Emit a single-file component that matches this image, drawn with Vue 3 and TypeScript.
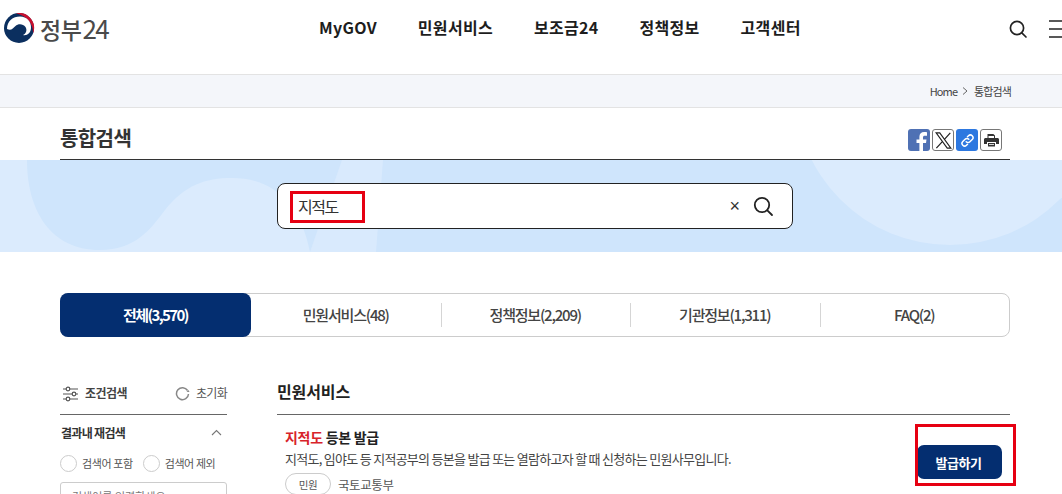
<script setup lang="ts">
const navItems: string[] = ['MyGOV', '민원서비스', '보조금24', '정책정보', '고객센터']
const tabs: string[] = ['민원서비스(48)', '정책정보(2,209)', '기관정보(1,311)', 'FAQ(2)']
</script>

<template>
  <div class="page">
    <header class="top">
      <div class="logo">
        <svg width="32" height="30" viewBox="0 0 32 30">
          <circle cx="16" cy="15" r="15" fill="#0b2f5f" />
          <path d="M13 .3A15 15 0 0 1 30 20.500C30.500 11 24 3 13 .3Z" fill="#c8102e" />
          <path d="M4 16C4 8 10 3.500 17 3.500 24 3.500 28.500 9 28 15 27.800 20 24 23 20 22 23 21 24.500 17 22.500 14 20 10.500 15 10.500 12.500 13 10 15.500 8 18 4 16Z" fill="#fff" />
        </svg>
        <span class="logo-text">정부<b>24</b></span>
      </div>
      <nav class="nav">
        <a v-for="n in navItems" :key="n">{{ n }}</a>
      </nav>
      <div class="top-icons">
        <svg width="20" height="20" viewBox="0 0 20 20" fill="none" stroke="#222" stroke-width="1.700">
          <circle cx="9" cy="9" r="6.600" />
          <path d="M13.800 13.800 18 18" stroke-linecap="round" />
        </svg>
        <svg class="burger" width="16" height="18" viewBox="0 0 16 18" stroke="#222" stroke-width="1.600">
          <path d="M0 1h16M0 9h16M0 17h16" />
        </svg>
      </div>
    </header>

    <div class="crumb">
      <div class="wrap crumb-in">
        <span class="home">Home</span>
        <svg width="6" height="8" viewBox="0 0 6 8" fill="none" stroke="#666"><path d="M1 .5 5 4 1 7.500" /></svg>
        <span class="here">통합검색</span>
      </div>
    </div>

    <div class="wrap title-row">
      <h1>통합검색</h1>
      <div class="share">
        <span class="sq fb">
          <svg width="21" height="22" viewBox="0 0 21 22"><path d="M14 22v-8h3l.5-3.500H14V8.500c0-1.200.5-1.800 1.800-1.800H18V3.200c-.6-.1-1.700-.2-2.800-.2-2.900 0-4.800 1.700-4.800 4.800v2.700H7.500V14h2.900v8Z" fill="#fff" /></svg>
        </span>
        <span class="sq line">
          <svg width="17" height="17" viewBox="0 0 15 15" fill="none" stroke="#222"><path d="M1 .8h3.200L14 14.200h-3.200Z" /><path d="M13.500.8 8.300 6.500M6.300 8.700 1.200 14.200" stroke-width="1.100" /></svg>
        </span>
        <span class="sq link">
          <svg width="15" height="15" viewBox="0 0 15 15" fill="none" stroke="#fff" stroke-width="1.500" stroke-linecap="round"><path d="M6.200 8.800a2.600 2.600 0 0 0 3.700 0l2.300-2.300a2.600 2.600 0 0 0-3.700-3.700L7.500 3.800" /><path d="M8.800 6.200a2.600 2.600 0 0 0-3.700 0L2.800 8.500a2.600 2.600 0 0 0 3.700 3.700l1-1" /></svg>
        </span>
        <span class="sq line">
          <svg width="15" height="14" viewBox="0 0 15 14" fill="#333"><path d="M3.500 1h5.800L11 2.500V5H10V3H4.500v2h-1Z" /><path d="M1.500 5h12c.8 0 1.500.7 1.500 1.500V11h-3V9H3v2H0V6.500C0 5.700.7 5 1.500 5Z" /><path d="M4 10h7v3.500H4Z" /><path d="M5 11.500h5" stroke="#fff" stroke-width=".8" /></svg>
        </span>
      </div>
    </div>

    <section class="band">
      <svg class="band-art" width="1062" height="92" viewBox="0 0 1062 92">
        <path d="M0 0H27C27 50 50 90 100 90 135 90 150 70 165 50 185 25 205 18 232 18 270 18 300 40 310 92H0Z" fill="#dbebfd" />
        <path d="M342 0H383L376 92H310Z" fill="#d9eafd" />
        <circle cx="950" cy="-70" r="155" fill="#dbebfd" />
      </svg>
      <div class="searchbox">
        <span class="query">지적도</span>
        <span class="clear">×</span>
        <svg width="22" height="22" viewBox="0 0 22 22" fill="none" stroke="#222" stroke-width="1.800">
          <circle cx="10" cy="10" r="7.200" />
          <path d="M15.300 15.300 20 20" stroke-linecap="round" />
        </svg>
      </div>
    </section>

    <div class="wrap">
      <div class="tabs">
        <a class="tab active">전체(3,570)</a>
        <a v-for="t in tabs" :key="t" class="tab">{{ t }}</a>
      </div>

      <div class="cols">
        <aside class="side">
          <div class="side-head">
            <svg width="17" height="16" viewBox="0 0 17 16" fill="none" stroke="#555" stroke-width="1.200">
              <path d="M1 3h3M8 3h8M1 8h9M14 8h2M1 13h3M8 13h8" />
              <circle cx="6" cy="3" r="1.800" /><circle cx="12" cy="8" r="1.800" /><circle cx="6" cy="13" r="1.800" />
            </svg>
            <strong>조건검색</strong>
            <svg class="reset-ic" width="15" height="15" viewBox="0 0 15 15" fill="none" stroke="#888" stroke-width="1.500">
              <path d="M12.600 4.500A6 6 0 1 0 13.500 8" />
              <path d="M13.500 4 11.500 6h3Z" fill="#888" stroke="none" />
            </svg>
            <span class="reset">초기화</span>
          </div>
          <div class="side-sub">
            <strong>결과내 재검색</strong>
            <svg width="11" height="7" viewBox="0 0 11 7" fill="none" stroke="#777" stroke-width="1.100"><path d="M1 6 5.500 1.500 10 6" /></svg>
          </div>
          <div class="radios">
            <label><i></i>검색어 포함</label>
            <label><i></i>검색어 제외</label>
          </div>
          <div class="side-input">검색어를 입력하세요</div>
        </aside>

        <main class="main">
          <h2>민원서비스</h2>
          <div class="item">
            <div class="item-body">
              <h3><em>지적도</em> 등본 발급</h3>
              <p>지적도, 임야도 등 지적공부의 등본을 발급 또는 열람하고자 할 때 신청하는 민원사무입니다.</p>
              <div class="meta"><span class="pill">민원</span><span>국토교통부</span></div>
            </div>
            <button class="issue" type="button">발급하기</button>
          </div>
        </main>
      </div>
    </div>

    <span class="mark mark-query"></span>
    <span class="mark mark-btn"></span>
  </div>
</template>

<style>
html, body { margin: 0; overflow: hidden; background: #fff; }
</style>

<style scoped>
.page {
  position: relative;
  width: 1062px;
  height: 494px;
  overflow: hidden;
  font-family: "Noto Sans CJK KR", "Noto Sans", sans-serif;
  color: #222;
}
.wrap { width: 950px; margin-left: 60px; }

.top { height: 74px; position: relative; display: flex; align-items: flex-start; }
.logo { position: absolute; left: 3px; top: 13px; display: flex; align-items: center; gap: 5px; height: 30px; }
.logo-text { font-size: 23px; font-weight: 500; color: #4a4a4a; line-height: 30px; white-space: nowrap; letter-spacing: -.4px; }
.logo-text b { font-size: 26px; font-weight: 400; letter-spacing: -1.800px; margin-left: 1px; }
.nav { margin-left: 319px; margin-top: 15px; display: flex; gap: 41px; }
.nav a { font-size: 16px; font-weight: 700; line-height: 24px; color: #1d1d1d; letter-spacing: .3px; }
.top-icons { position: absolute; left: 1008px; top: 19px; display: flex; align-items: center; gap: 21px; }

.crumb { height: 32px; background: #f4f6fa; border-top: 1px solid #e3e3e3; border-bottom: 1px solid #e3e3e3; }
.crumb-in { display: flex; justify-content: flex-end; align-items: center; gap: 5px; height: 32px; font-size: 11px; color: #444; margin-right: 0; }
.home { letter-spacing: -.9px; }
.here { margin-left: 1px; letter-spacing: -.9px; margin-right: -1px; }

.title-row { height: 51px; border-bottom: 1px solid #333; display: flex; justify-content: space-between; align-items: flex-start; }
h1 { margin: 14px 0 0; font-size: 20px; line-height: 32px; font-weight: 700; color: #333; letter-spacing: -.6px; }
.share { display: flex; gap: 2px; margin: 21px 8px 0 0; }
.sq { width: 22px; height: 22px; box-sizing: border-box; border-radius: 3px; display: flex; align-items: center; justify-content: center; overflow: hidden; }
.fb { background: #4f71b4; align-items: flex-end; }
.line { border: 1px solid #777; background: #fff; }
.link { background: #2d78e0; }

.band { position: relative; height: 92px; background: #cfe5fc; overflow: hidden; }
.band-art { position: absolute; left: 0; top: 0; }
.searchbox { position: relative; margin-left: 277px; top: 23px; width: 516px; height: 46px; box-sizing: border-box; background: #fff; border: 1px solid #222; border-radius: 8px; display: flex; align-items: center; padding: 0 18px 0 20px; }
.query { font-size: 16px; color: #333; flex: 1; letter-spacing: -1.500px; }
.clear { font-size: 18px; color: #333; margin-right: 12px; font-family: "Liberation Sans", sans-serif; }

.tabs { margin-top: 41px; height: 44px; box-sizing: border-box; border: 1px solid #ccc; border-radius: 8px; display: flex; align-items: center; }
.tab { flex: 1; position: relative; text-align: center; font-size: 15px; line-height: 44px; color: #444; letter-spacing: -1.200px; font-weight: 500; }
.tab + .tab + .tab::before { content: ""; position: absolute; left: 0; top: 10px; height: 24px; width: 1px; background: #d5d5d5; }
.tab.active { flex: 0 0 191px; height: 44px; margin: -1px 0 -1px -1px; background: #042e70; color: #fff; border-radius: 8px; font-weight: 700; letter-spacing: -1.600px; }

.cols { display: flex; gap: 50px; margin-top: 45px; }
.side { width: 167px; flex: none; }
.side-head { height: 29px; padding: 3px 0 0 2px; border-bottom: 1px solid #666; display: flex; align-items: flex-start; }
.side-head strong { margin-left: 6px; font-size: 12px; line-height: 16px; letter-spacing: -.55px; color: #444; }
.side-head svg:first-child { margin-top: 1px; }
.reset-ic { margin: 1px 6px 0 auto; }
.reset { font-size: 12px; line-height: 16px; color: #555; letter-spacing: -.7px; }
.side-sub { display: flex; justify-content: space-between; align-items: center; margin-top: 8px; height: 18px; padding-right: 5px; padding-left: 1px; }
.side-sub strong { font-size: 12px; color: #333; letter-spacing: -.7px; }
.radios { display: flex; gap: 10px; margin-top: 14px; }
.radios label { display: flex; align-items: center; gap: 5px; font-size: 11px; color: #555; letter-spacing: -.4px; line-height: 17px; white-space: nowrap; }
.radios i { width: 17px; height: 17px; border: 1px solid #ccc; border-radius: 50%; box-sizing: border-box; }
.side-input { margin-top: 10px; height: 30px; box-sizing: border-box; border: 1px solid #ccc; border-radius: 3px; font-size: 11px; color: #777; padding: 5px 11px; line-height: 16px; }

.main { flex: 1; }
h2 { margin: -2px 0 0; height: 32px; padding-bottom: 2px; border-bottom: 1px solid #666; font-size: 16px; line-height: 22px; font-weight: 700; color: #222; letter-spacing: -.1px; }
.item { display: flex; justify-content: space-between; padding-left: 8px; position: relative; }
.item-body { padding-top: 12px; }
h3 { margin: 0; font-size: 14px; line-height: 20px; font-weight: 700; color: #222; letter-spacing: -.3px; }
h3 em { font-style: normal; color: #d8232a; }
p { margin: 3px 0 0; font-size: 13px; line-height: 18px; color: #444; letter-spacing: -.72px; white-space: nowrap; }
.meta { display: flex; align-items: center; gap: 7px; margin-top: 5px; font-size: 12.500px; color: #555; letter-spacing: -.4px; }
.pill { width: 46px; height: 22px; box-sizing: border-box; border: 1px solid #ccc; border-radius: 11px; font-size: 10.500px; display: flex; align-items: center; justify-content: center; color: #555; }
.issue { position: absolute; left: 640px; top: 30px; width: 85px; height: 34px; border: 0; border-radius: 7px; background: #042e70; color: #fff; font: 700 13px "Noto Sans CJK KR", sans-serif; letter-spacing: -.5px; padding: 0 2px 0 0; }

.mark { position: absolute; border: 3px solid #e60012; box-sizing: border-box; pointer-events: none; }
.mark-query { left: 290px; top: 191px; width: 75px; height: 32px; }
.mark-btn { left: 915px; top: 424px; width: 101px; height: 62px; }
</style>
